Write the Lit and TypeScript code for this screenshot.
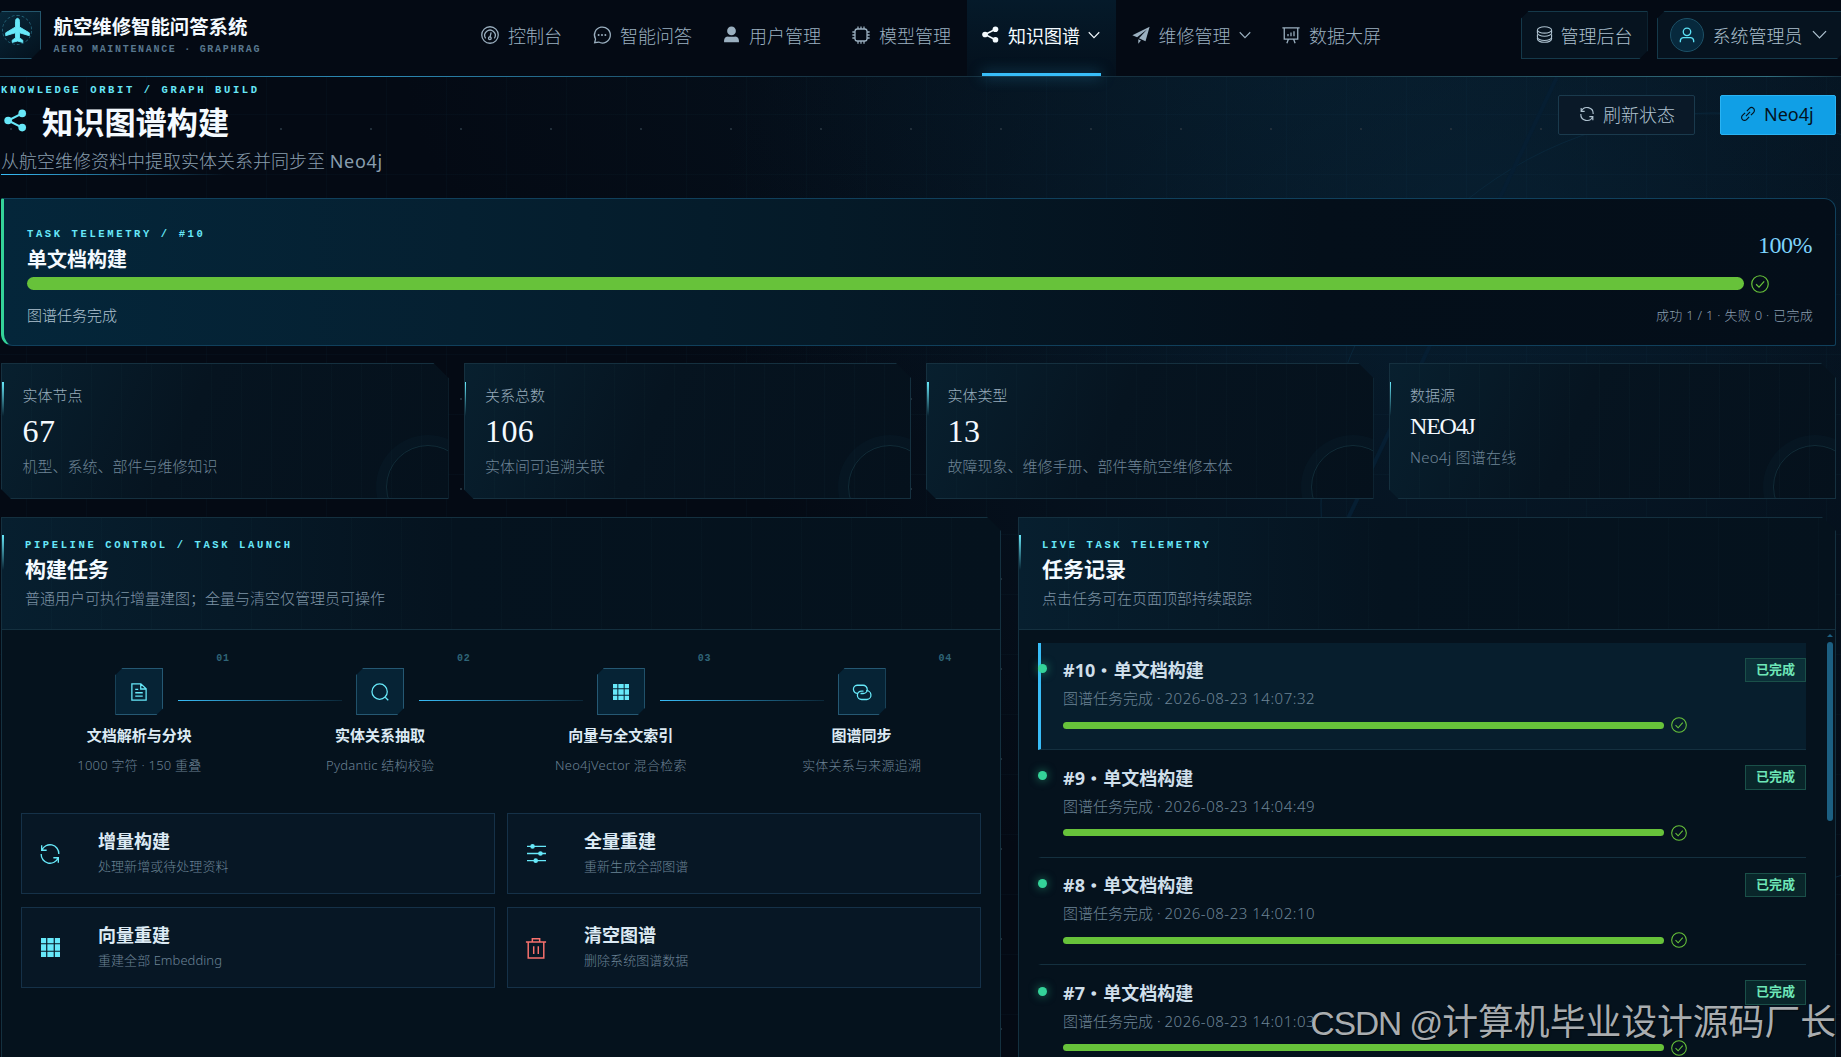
import { LitElement, html, css, svg, nothing } from "lit";
import { customElement } from "lit/decorators.js";
import { classMap } from "lit/directives/class-map.js";

const paths: Record<string, unknown> = {
  plane: svg`<path fill="currentColor" stroke="currentColor" stroke-width=".8" d="M12 1.2c1.1 0 1.8 1.2 1.8 2.800v4.900l8.700 5.200v2.500l-8.700-2.600v4.600l2.900 2v2L12 21.400l-4.700 1.200v-2l2.900-2V14l-8.700 2.600v-2.500l8.700-5.200V4c0-1.600.7-2.800 1.8-2.800z"/>`,
  gauge: svg`<circle cx="12" cy="12" r="11"/><path d="M6.200 16.500a7 7 0 1 1 11.600 0M12 15L13.500 8.500"/><circle cx="11.800" cy="16.400" r="1.800"/>`,
  chat: svg`<path d="M2.200 22.200l1.200-4.800A10.600 10.600 0 1 1 7.600 21.400z"/><g fill="currentColor" stroke="none"><circle cx="7.500" cy="12" r="1.300"/><circle cx="12" cy="12" r="1.300"/><circle cx="16.500" cy="12" r="1.300"/></g>`,
  user: svg`<g fill="currentColor" stroke="none"><circle cx="12" cy="7" r="6.200"/><path d="M1.500 23v-2.500a6 6 0 0 1 6-5.500h9a6 6 0 0 1 6 5.500V23z"/></g>`,
  chip: svg`<rect x="4" y="4" width="16" height="16" rx="3"/><path d="M8 4V.5M12 4V.5M16 4V.5M8 23.500V20M12 23.500V20M16 23.500V20M4 8H.5M4 12H.5M4 16H.5M23.500 8H20M23.500 12H20M23.500 16H20"/>`,
  share: svg`<g fill="currentColor" stroke="none"><circle cx="4.300" cy="12" r="4"/><circle cx="19" cy="4.600" r="4"/><circle cx="19" cy="19.400" r="4"/></g><path stroke-width="2.200" d="M19 4.600L4.300 12L19 19.400"/>`,
  send: svg`<path fill="currentColor" stroke="none" d="M23.500 1L.5 12.200l6.300 2.700L20 4.600 9.300 16.200l8.700 4.200zM8.400 17.600v5.900l3.500-4.300z"/>`,
  board: svg`<path d="M.5 2.500h23M3 2.500V17.500h18V2.500M8.500 17.800L6.500 23M15.500 17.800l2 5.200M8 13.500v-3M12 13.500v-5M16 13.500V7"/>`,
  coins: svg`<ellipse cx="12" cy="5.500" rx="10" ry="4.500"/><path d="M2 5.500v4.500c0 2.500 4.500 4.500 10 4.500s10-2 10-4.500V5.500M2 12v4c0 2.500 4.500 4.500 10 4.500s10-2 10-4.500v-4M2 17v1.500C2 21 6.500 23 12 23s10-2 10-4.500V17"/>`,
  avatar: svg`<circle cx="12" cy="7.300" r="5.600"/><path d="M2 23v-2.500a5 5 0 0 1 5-4.500h10a5 5 0 0 1 5 4.500V23"/>`,
  down: svg`<path d="M1.500 6.500L12 17.500L22.500 6.500"/>`,
  refresh: svg`<path d="M2.200 7.500A10.600 10.600 0 0 1 22.600 12M21.800 16.500A10.600 10.600 0 0 1 1.400 12M2 1.500v6h6M22 22.500v-6h-6"/>`,
  link: svg`<path d="M10 7l4.500-4.500a4.800 4.800 0 0 1 7 7L17 14M14 17l-4.500 4.500a4.800 4.800 0 0 1-7-7L7 10M8.500 15.500l7-7"/>`,
  check: svg`<circle cx="12" cy="12" r="11"/><path d="M6.800 12.300l3.900 3.900 6.900-7.600"/>`,
  doc: svg`<path d="M2.500 1.200h12l7 6.500V22.800h-19zM14.300 1.500V8h7M7 8.500h4M7 13h10M7 17.500h10"/>`,
  search: svg`<circle cx="11.500" cy="11.500" r="10.200"/><path d="M19 19l4 4"/>`,
  grid: svg`<path fill="currentColor" stroke="none" d="M0 0h6.500v6.500H0zM8 0h8v6.500H8zM17.500 0H24v6.500h-6.500zM0 8h6.500v8H0zM8 8h8v8H8zM17.500 8H24v8h-6.500zM0 17.500h6.500V24H0zM8 17.500h8V24H8zM17.500 17.500H24V24h-6.500z"/>`,
  chain: svg`<path d="M6.500 13.800A5 5 0 0 1 5.500 3h8a5.500 5.500 0 0 1 0 11H10M17.500 10.200A5 5 0 0 1 18.500 22h-7a5.600 5.600 0 0 1 0-11.300H14"/>`,
  sliders: svg`<path stroke-width="1.600" d="M0 3h24M0 12h24M0 21h24"/><g fill="currentColor" stroke="none"><circle cx="7" cy="3" r="2.900"/><circle cx="17" cy="12" r="2.900"/><circle cx="11" cy="21" r="2.900"/></g>`,
  trash: svg`<path d="M1 5.500h22M3.500 5.500V23h17V5.500M8 5V2h8v3M9.500 10v8.500M14.500 10v8.500"/>`,
};

const icon = (name: string, size: number, stroke = 1.6) => html`<svg
  class="icon" width=${size} height=${size} viewBox="0 0 24 24" fill="none"
  stroke="currentColor" stroke-width=${stroke}>${paths[name]}</svg>`;

const nav = [
  { icon: "gauge", label: "控制台" },
  { icon: "chat", label: "智能问答" },
  { icon: "user", label: "用户管理" },
  { icon: "chip", label: "模型管理" },
  { icon: "share", label: "知识图谱", active: true, menu: true },
  { icon: "send", label: "维修管理", menu: true },
  { icon: "board", label: "数据大屏" },
];

const stats = [
  { label: "实体节点", value: "67", note: "机型、系统、部件与维修知识" },
  { label: "关系总数", value: "106", note: "实体间可追溯关联" },
  { label: "实体类型", value: "13", note: "故障现象、维修手册、部件等航空维修本体" },
  { label: "数据源", value: "NEO4J", note: "Neo4j 图谱在线", word: true },
];

const steps = [
  { no: "01", icon: "doc", name: "文档解析与分块", note: "1000 字符 · 150 重叠" },
  { no: "02", icon: "search", name: "实体关系抽取", note: "Pydantic 结构校验" },
  { no: "03", icon: "grid", name: "向量与全文索引", note: "Neo4jVector 混合检索" },
  { no: "04", icon: "chain", name: "图谱同步", note: "实体关系与来源追溯" },
];

const actions = [
  { icon: "refresh", size: 20, name: "增量构建", note: "处理新增或待处理资料" },
  { icon: "sliders", size: 19, name: "全量重建", note: "重新生成全部图谱" },
  { icon: "grid", size: 19, name: "向量重建", note: "重建全部 Embedding" },
  { icon: "trash", size: 22, name: "清空图谱", note: "删除系统图谱数据", danger: true },
];

const tasks = [
  { id: 10, time: "2026-08-23 14:07:32", active: true },
  { id: 9, time: "2026-08-23 14:04:49" },
  { id: 8, time: "2026-08-23 14:02:10" },
  { id: 7, time: "2026-08-23 14:01:03" },
];

@customElement("app-root")
export class AppRoot extends LitElement {
  static styles = css`
    :host {
      display: block;
      position: relative;
      height: 1057px;
      overflow: hidden;
      color: #f4faff;
      font-family: "Noto Sans", "Noto Sans CJK SC", sans-serif;
      font-weight: 300;
      background:
        radial-gradient(circle 760px at 1480px 250px, rgba(10, 48, 72, 0.45), transparent),
        radial-gradient(ellipse 900px 420px at 1300px 60px, rgba(10, 44, 62, 0.3), transparent),
        #040a14;
    }
    * { box-sizing: border-box; }
    .icon { display: block; flex: none; overflow: visible; }

    .backdrop {
      position: absolute;
      inset: 0;
      background-image:
        linear-gradient(90deg, rgba(56, 189, 248, 0.025) 1px, transparent 1px),
        linear-gradient(rgba(56, 189, 248, 0.025) 1px, transparent 1px);
      background-size: 60px 60px;
      background-position: 26px 54px;
    }
    .arcs { position: absolute; inset: 0; }

    .mono {
      font-family: "Liberation Mono", monospace;
      font-weight: 700;
      font-size: 10.500px;
      line-height: 12px;
      letter-spacing: 2.620px;
      color: #67e8f9;
      white-space: pre;
    }

    .top {
      position: relative;
      display: flex;
      height: 77px;
      background: #040a14;
      border-bottom: 1px solid #16303f;
    }
    .top::after {
      content: "";
      position: absolute;
      left: 0; right: 0; bottom: -1px;
      height: 1px;
      background: linear-gradient(90deg, rgba(56, 189, 248, 0.15), rgba(56, 189, 248, 0.65) 20%, transparent 45%, transparent 70%, rgba(103, 232, 249, 0.35) 96%, transparent);
    }
    .brand { flex: 0 0 472.700px; margin-left: -7px; display: flex; gap: 12.500px; }
    .logo {
      width: 48px; height: 48px; margin-top: 11px;
      display: flex; justify-content: center; padding-top: 3px;
      color: #67e8f9;
      border: 1px solid #24566c;
      background: linear-gradient(145deg, #08293b, #04111d);
      clip-path: polygon(9px 0, 100% 0, 100% 38px, 38px 100%, 0 100%, 0 9px);
    }
    .ring {
      width: 30px; height: 30px;
      display: flex; align-items: center; justify-content: center;
      border: 1px dashed #226075; border-radius: 50%;
    }
    .brand-name { padding-top: 13.500px; font-size: 19.400px; line-height: 25px; font-weight: 700; white-space: nowrap; }
    .brand-sub { margin-top: 5.500px; color: #58778e; font-size: 10px; letter-spacing: 1.690px; }

    .nav { display: flex; height: 76px; }
    .nav-item {
      position: relative;
      display: flex; align-items: center; gap: 8.500px;
      padding: 0 15.750px 7px;
      font-size: 18px;
      color: #9bb0c0;
      white-space: nowrap;
    }
    .nav-item.active { color: #f4fbff; background: linear-gradient(#051a2a, #04101c); font-weight: 400; }
    .nav-item.active::after {
      content: "";
      position: absolute;
      left: 15px; right: 15px; bottom: 0; height: 3px;
      background: #38bdf8;
      box-shadow: 0 0 14px rgba(56, 189, 248, 0.6);
      z-index: 1;
    }
    .tools { margin: 11px -4px 0 auto; display: flex; gap: 9px; height: 48px; }
    .tool {
      display: flex; align-items: center;
      font-size: 18px; color: #acc0ce;
      border: 1px solid #15394a;
      background: #06131f;
      clip-path: polygon(8px 0, 100% 0, 100% 40px, calc(100% - 8px) 100%, 0 100%, 0 8px);
      white-space: nowrap;
    }
    .tool.admin { width: 127px; padding: 0 0 1px 14px; gap: 8px; }
    .tool.me { width: 188.500px; padding: 0 0 1px 12px; gap: 9px; }
    .face {
      width: 34px; height: 34px; border-radius: 50%;
      display: flex; align-items: center; justify-content: center;
      background: #07293d; border: 1px solid #1d5066; color: #5ce1f5;
    }

    .main { position: relative; margin: 0 5px 0 1px; }
    .head { display: flex; justify-content: space-between; height: 121px; padding-top: 7px; }
    .head-title {
      display: flex; align-items: center; gap: 15px;
      height: 40px; margin-top: 4px; padding-left: 3px;
      font-size: 31.200px; font-weight: 700;
    }
    .head-title .icon { color: #67e8f9; }
    .head-note { position: relative; margin-top: 9px; font-size: 18px; line-height: 25px; color: #889dae; }
    .head-note::after {
      content: ""; position: absolute; left: 0; bottom: -1px; width: 225px; height: 1px;
      background: linear-gradient(90deg, #38bdf8, transparent);
    }
    .head-note .latin { letter-spacing: 0.700px; font-weight: 400; }
    .head-buttons { display: flex; gap: 25px; margin: 11px 0 0 0; }
    .btn {
      display: flex; align-items: center; gap: 9px;
      height: 40px; padding: 0 0 2px 21px;
      font-size: 18px; border-radius: 2px;
      border: 1px solid #1a3a4d; background: #0a1928; color: #afc2d0;
    }
    .btn.plain { width: 137px; }
    .btn.primary { width: 116px; padding-left: 20px; background: #109fe6; border-color: #2ab3f3; color: #04121e; font-weight: 400; }

    .hero {
      height: 148px;
      padding: 29px 23px 0 23px;
      border: 1px solid #10405c;
      border-left: 3px solid #34d399;
      border-radius: 2px 12px 2px 12px;
      background: linear-gradient(90deg, #04263a, #052031 25%, #051a28 45%, #040f1a 72%, #040e19);
    }
    .hero-row { display: flex; justify-content: space-between; height: 44px; }
    .hero-title { margin-top: 7px; font-size: 20px; line-height: 25px; font-weight: 700; }
    .hero-pct { margin-top: 2px; font: 400 24px/30px "Liberation Serif", serif; letter-spacing: -0.500px; color: #7dd3fc; }
    .bar-row { display: flex; align-items: center; gap: 7px; color: #67c23a; }
    .bar { flex: none; background: #67c23a; border-radius: 100px; }
    .hero .bar { width: 1717px; height: 13px; }
    .hero .bar-row { height: 19px; margin-top: 2px; }
    .hero-foot { display: flex; justify-content: space-between; align-items: center; height: 20px; margin-top: 11px; font-size: 15px; color: #aec2d0; }
    .hero-foot .minor { font-size: 13px; color: #8b9fb0; letter-spacing: 0.280px; margin-right: -1px; }

    .stats { display: grid; grid-template-columns: repeat(4, 1fr); gap: 15px; margin-top: 17px; }
    .stat {
      position: relative; overflow: hidden;
      height: 136px; padding: 20.500px 0 0 20.500px;
      border: 1px solid #15303f;
      background:
        repeating-linear-gradient(90deg, transparent 0 29px, rgba(103, 232, 249, 0.015) 29px 30px),
        linear-gradient(115deg, #08202f, #061420 42%, #05111c);
      clip-path: polygon(0 0, calc(100% - 15px) 0, 100% 15px, 100% 100%, 10px 100%, 0 calc(100% - 10px));
    }
    .stat::before { content: ""; position: absolute; left: 0; top: 18px; width: 1.500px; height: 34px; background: linear-gradient(#67e8f9, transparent); }
    .stat::after {
      content: ""; position: absolute; right: -22px; bottom: -31px;
      width: 82px; height: 82px; border-radius: 50%;
      border: 1px solid rgba(103, 232, 249, 0.12);
      box-shadow: 0 0 0 10px rgba(103, 232, 249, 0.022);
    }
    .stat-label { font-size: 15px; line-height: 20px; color: #97abbb; }
    .stat-value { margin-top: 10.500px; font: 400 32px/32px "Liberation Serif", serif; letter-spacing: 0.400px; }
    .stat-value.word { margin-top: 7px; font-size: 24px; line-height: 28px; letter-spacing: -1.200px; }
    .stat-note { margin-top: 8.500px; font-size: 15px; line-height: 20px; color: #6e8496; }
    .word + .stat-note { margin-top: 7px; letter-spacing: 0.250px; }

    .panels { display: grid; grid-template-columns: 1000px 818px; gap: 17px; margin-top: 18px; }
    .panel {
      position: relative;
      height: 600px;
      border: 1px solid #14303f;
      background: #05121d;
      clip-path: polygon(0 0, calc(100% - 14px) 0, 100% 14px, 100% 100%, 0 100%);
    }
    .panel::before { content: ""; position: absolute; z-index: 1; left: 0; top: 17px; width: 2px; height: 35px; background: linear-gradient(#67e8f9, transparent); }
    .panel-head {
      height: 112px; padding: 20.500px 0 0 23px;
      border-bottom: 1px solid #14303f;
      background:
        repeating-linear-gradient(90deg, transparent 0 49px, rgba(103, 232, 249, 0.015) 49px 50px),
        linear-gradient(90deg, #071f2f, #05131f 45%, #05121d);
    }
    .panel-title { margin-top: 5.500px; font-size: 21px; line-height: 26px; font-weight: 700; }
    .panel-note { margin-top: 6px; font-size: 15px; line-height: 20px; color: #7f94a6; }

    .steps { display: grid; grid-template-columns: repeat(4, 1fr); padding: 24px 18px 0 17px; }
    .step { position: relative; display: flex; flex-direction: column; align-items: center; white-space: nowrap; }
    .step-no { align-self: flex-end; margin-right: 30px; font-size: 10px; line-height: 10px; letter-spacing: 0.800px; color: #2f6578; }
    .step-box {
      display: flex; align-items: center; justify-content: center;
      width: 48px; height: 47px; margin-top: 4px;
      color: #67e8f9; background: #062335; border: 1px solid #255873;
      clip-path: polygon(7px 0, 100% 0, 100% 40px, calc(100% - 7px) 100%, 0 100%, 0 7px);
    }
    .step:not(:last-child)::after {
      content: ""; position: absolute; left: 159px; top: 46px; width: 164px; height: 1px;
      background: linear-gradient(90deg, #38bdf8, rgba(56, 189, 248, 0.12));
    }
    .step-name { margin-top: 9.500px; font-size: 15px; line-height: 20px; font-weight: 700; color: #dceaf4; }
    .step-note { margin-top: 11.500px; font-size: 13px; line-height: 18px; color: #6b8194; letter-spacing: 0.220px; }

    .actions { display: grid; grid-template-columns: 474px 474px; gap: 13px 12px; margin: 39px 0 0 19px; }
    .action {
      display: flex; align-items: center;
      height: 81px; padding-left: 16px;
      border: 1px solid #153148; background: #071725;
    }
    .action-icon { width: 24px; margin-right: 36px; display: flex; justify-content: center; color: #67e8f9; }
    .action-icon.danger { color: #f8716d; }
    .action-text { margin-top: -3px; }
    .action-name { font-size: 18px; line-height: 24px; font-weight: 700; color: #dceaf4; }
    .action-note { margin-top: 4px; font-size: 13px; line-height: 18px; color: #6b8395; letter-spacing: 0.050px; }

    .list { padding: 12.500px 0 0 19px; width: 787px; }
    .task {
      position: relative;
      height: 107.670px; padding: 15.500px 0 0 22px;
      border-left: 3px solid transparent;
      border-bottom: 1px solid #14303f;
    }
    .task.active { background: #071e2d; border-left-color: #38bdf8; }
    .task::before {
      content: ""; position: absolute; left: -3px; top: 21.200px;
      width: 9px; height: 9px; border-radius: 50%;
      background: #34d399; box-shadow: 0 0 10px rgba(52, 211, 153, 0.6);
    }
    .task-top { display: flex; justify-content: space-between; height: 24px; }
    .task-name { font-size: 18px; line-height: 24px; font-weight: 700; color: #cfdfea; }
    .task-name .sep { padding: 0 2.500px 0 1.500px; -webkit-text-stroke: 1.500px currentColor; }
    .badge {
      width: 61px; height: 24.500px; margin-top: -0.500px;
      border: 1px solid #1a5049; background: rgba(52, 211, 153, 0.1);
      color: #6ee7b7; font-size: 13px; line-height: 21px; font-weight: 700; text-align: center;
    }
    .task-note { margin-top: 7px; font-size: 15px; line-height: 18px; color: #6d8496; }
    .task-time { letter-spacing: 0.520px; }
    .task .bar-row { height: 16px; margin-top: 10px; }
    .task .bar { width: 601px; height: 7px; }
    .scroll { position: absolute; right: 2px; top: 116px; width: 6px; display: flex; flex-direction: column; align-items: center; gap: 5px; }
    .scroll-up { border: 3px solid transparent; border-top: 0; border-bottom: 3px solid #1c5f82; }
    .scroll-thumb { width: 6px; height: 179px; border-radius: 3px; background: #1c5f82; }

    .mark {
      position: absolute; right: 5px; bottom: 8px;
      font: 400 35.800px/50px "Noto Sans CJK SC", sans-serif;
      color: rgba(200, 203, 205, 0.85);
      text-shadow: 1px 1px 1px rgba(0, 0, 0, 0.5);
      white-space: pre;
    }
    .mark .latin { font-family: "Liberation Sans", sans-serif; display: inline-block; font-size: 33.500px; letter-spacing: -1.100px; }
  `;

  private backdrop() {
    const dots = [];
    for (let y = 128; y < 1057; y += 90) {
      for (let x = 10; x < 1841; x += 90) {
        dots.push(svg`<rect x=${x} y=${y} width="2" height="2" />`);
      }
    }
    return html`<div class="backdrop"></div>
      <svg class="arcs" width="1841" height="1057" fill="none">
        <circle cx="1713" cy="505" r="392" stroke="#09263a" />
        <path d="M1557 77L1300 620" stroke="#061e32" stroke-width="4" />
        <g fill="#212e39">${dots}</g>
      </svg>`;
  }

  private header() {
    return html`<header class="top">
      <div class="brand">
        <div class="logo"><div class="ring">${icon("plane", 27)}</div></div>
        <div>
          <div class="brand-name">航空维修智能问答系统</div>
          <div class="mono brand-sub">AERO MAINTENANCE · GRAPHRAG</div>
        </div>
      </div>
      <nav class="nav">
        ${nav.map((n) => html`<div class=${classMap({ "nav-item": true, active: !!n.active })}>
          ${icon(n.icon, n.icon === "share" || n.icon === "user" ? 17 : 18, 1.7)}<span>${n.label}</span>
          ${n.menu ? icon("down", 12, 2.2) : nothing}
        </div>`)}
      </nav>
      <div class="tools">
        <div class="tool admin">${icon("coins", 17)}<span>管理后台</span></div>
        <div class="tool me">
          <div class="face">${icon("avatar", 16, 2)}</div>
          <span>系统管理员</span>${icon("down", 15, 2)}
        </div>
      </div>
    </header>`;
  }

  private panelHead(eyebrow: string, title: string, note: string) {
    return html`<div class="panel-head">
      <div class="mono">${eyebrow}</div>
      <div class="panel-title">${title}</div>
      <div class="panel-note">${note}</div>
    </div>`;
  }

  render() {
    return html`
      ${this.backdrop()}
      ${this.header()}
      <main class="main">
        <section class="head">
          <div>
            <div class="mono">KNOWLEDGE ORBIT / GRAPH BUILD</div>
            <div class="head-title">${icon("share", 23)}<span>知识图谱构建</span></div>
            <div class="head-note">从航空维修资料中提取实体关系并同步至 <span class="latin">Neo4j</span></div>
          </div>
          <div class="head-buttons">
            <div class="btn plain">${icon("refresh", 14, 2)}<span>刷新状态</span></div>
            <div class="btn primary">${icon("link", 14, 2)}<span>Neo4j</span></div>
          </div>
        </section>

        <section class="hero">
          <div class="hero-row">
            <div>
              <div class="mono">TASK TELEMETRY / #10</div>
              <div class="hero-title">单文档构建</div>
            </div>
            <div class="hero-pct">100%</div>
          </div>
          <div class="bar-row"><div class="bar"></div>${icon("check", 18)}</div>
          <div class="hero-foot"><span>图谱任务完成</span><span class="minor">成功 1 / 1 · 失败 0 · 已完成</span></div>
        </section>

        <section class="stats">
          ${stats.map((s) => html`<div class="stat">
            <div class="stat-label">${s.label}</div>
            <div class=${classMap({ "stat-value": true, word: !!s.word })}>${s.value}</div>
            <div class="stat-note">${s.note}</div>
          </div>`)}
        </section>

        <section class="panels">
          <div class="panel">
            ${this.panelHead("PIPELINE CONTROL / TASK LAUNCH", "构建任务", "普通用户可执行增量建图；全量与清空仅管理员可操作")}
            <div class="steps">
              ${steps.map((s) => html`<div class="step">
                <div class="mono step-no">${s.no}</div>
                <div class="step-box">${icon(s.icon, s.icon === "grid" ? 16 : 18, 1.7)}</div>
                <div class="step-name">${s.name}</div>
                <div class="step-note">${s.note}</div>
              </div>`)}
            </div>
            <div class="actions">
              ${actions.map((a) => html`<div class="action">
                <div class=${classMap({ "action-icon": true, danger: !!a.danger })}>${icon(a.icon, a.size)}</div>
                <div class="action-text">
                  <div class="action-name">${a.name}</div>
                  <div class="action-note">${a.note}</div>
                </div>
              </div>`)}
            </div>
          </div>

          <div class="panel">
            ${this.panelHead("LIVE TASK TELEMETRY", "任务记录", "点击任务可在页面顶部持续跟踪")}
            <div class="list">
              ${tasks.map((t) => html`<div class=${classMap({ task: true, active: !!t.active })}>
                <div class="task-top">
                  <div class="task-name">#${t.id} <span class="sep">·</span> 单文档构建</div>
                  <div class="badge">已完成</div>
                </div>
                <div class="task-note">图谱任务完成 · <span class="task-time">${t.time}</span></div>
                <div class="bar-row"><div class="bar"></div>${icon("check", 16)}</div>
              </div>`)}
            </div>
            <div class="scroll"><div class="scroll-up"></div><div class="scroll-thumb"></div></div>
          </div>
        </section>
      </main>
      <div class="mark"><span class="latin">CSDN @</span>计算机毕业设计源码厂长</div>
    `;
  }
}
